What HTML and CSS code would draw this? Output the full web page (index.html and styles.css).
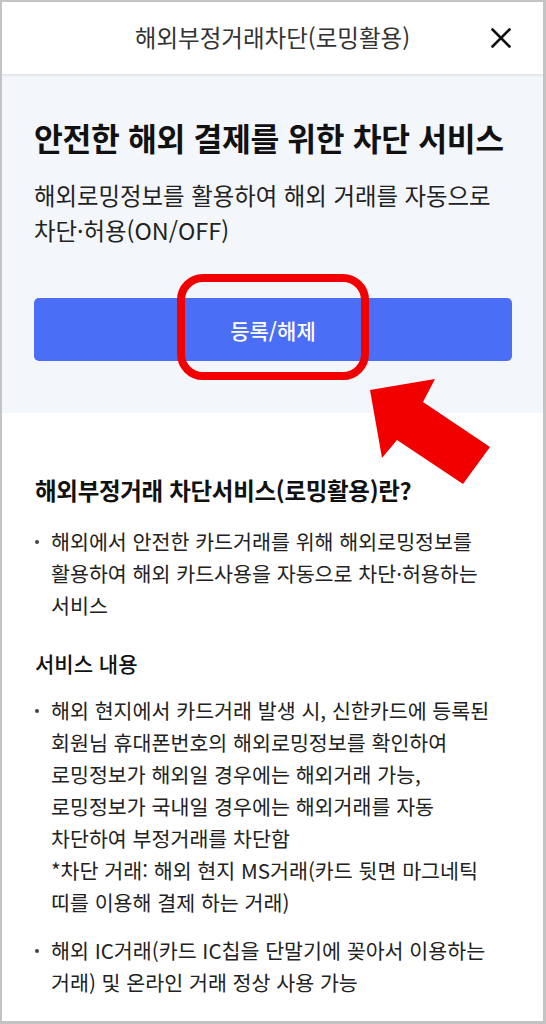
FILE: index.html
```html
<!DOCTYPE html>
<html lang="ko">
<head>
<meta charset="utf-8">
<link rel="stylesheet" href="styles.css">
</head>
<body>
<div class="frame">
  <header class="topbar">
    <h1 class="topbar-title">해외부정거래차단(로밍활용)</h1>
    <button class="close" aria-label="닫기">
      <svg width="22" height="22" viewBox="0 0 22 22"><path d="M2.5 2.5 L19.5 19.5 M19.5 2.5 L2.5 19.5" stroke="#111" stroke-width="2.6" stroke-linecap="round" fill="none"/></svg>
    </button>
  </header>

  <section class="hero">
    <h2 class="hero-title">안전한 해외 결제를 위한 차단 서비스</h2>
    <p class="hero-desc">해외로밍정보를 활용하여 해외 거래를 자동으로<br>차단·허용(ON/OFF)</p>
    <button class="primary">등록/해제</button>
  </section>

  <section class="info">
    <h3 class="info-title">해외부정거래 차단서비스(로밍활용)란?</h3>
    <ul class="bullets">
      <li>해외에서 안전한 카드거래를 위해 해외로밍정보를<br>활용하여 해외 카드사용을 자동으로 차단·허용하는<br>서비스</li>
    </ul>
    <h4 class="sub-title">서비스 내용</h4>
    <ul class="bullets">
      <li>해외 현지에서 카드거래 발생 시, 신한카드에 등록된<br>회원님 휴대폰번호의 해외로밍정보를 확인하여<br>로밍정보가 해외일 경우에는 해외거래 가능,<br>로밍정보가 국내일 경우에는 해외거래를 자동<br>차단하여 부정거래를 차단함<br>*차단 거래: 해외 현지 MS거래(카드 뒷면 마그네틱<br>띠를 이용해 결제 하는 거래)</li>
      <li>해외 IC거래(카드 IC칩을 단말기에 꽂아서 이용하는<br>거래) 및 온라인 거래 정상 사용 가능</li>
    </ul>
  </section>

  <svg class="annot" width="546" height="1024" viewBox="0 0 546 1024">
    <rect x="181" y="278" width="184" height="98" rx="22" ry="22" fill="none" stroke="#f20000" stroke-width="8"/>
    <polygon points="370,390 435,379 423,402 490,447 463,484 397,440 382,458" fill="#f20000"/>
  </svg>
</div>
</body>
</html>
```

FILE: styles.css
```css
* { box-sizing: border-box; }
html, body { margin: 0; padding: 0; }
body {
  font-family: "Noto Sans CJK KR", "Noto Sans", sans-serif;
  color: #1a1a1a;
  background: #fff;
}
.frame {
  position: relative;
  width: 546px;
  height: 1024px;
  border: 2px solid #c3c3c3;
  border-right-width: 3px;
  border-bottom-width: 3px;
  overflow: hidden;
  display: flex;
  flex-direction: column;
}
.topbar {
  height: 72px;
  flex: none;
  display: flex;
  align-items: center;
  justify-content: center;
  position: relative;
  background: #fff;
  box-shadow: 0 1px 3px rgba(0,0,0,0.12);
  z-index: 1;
}
.topbar-title {
  margin: 0 0 2px;
  font-size: 23.5px;
  font-weight: 400;
  color: #333;
}
.close {
  position: absolute;
  right: 31px;
  top: 25px;
  width: 22px;
  height: 22px;
  padding: 0;
  border: 0;
  background: none;
  display: flex;
}
.hero {
  flex: none;
  background: #f3f6fb;
  padding: 46px 31px 52px 32px;
  display: flex;
  flex-direction: column;
}
.hero-title {
  margin: 0;
  font-size: 31.3px;
  line-height: 36px;
  font-weight: 700;
  color: #111;
  letter-spacing: -0.3px;
  white-space: nowrap;
}
.hero-desc {
  margin: 22px 0 0;
  font-size: 23.4px;
  line-height: 35px;
  color: #222;
  font-weight: 400;
  white-space: nowrap;
}
.primary {
  margin-top: 50px;
  height: 63px;
  border: 0;
  border-radius: 5px;
  background: #4a6ef6;
  color: #fff;
  font-family: inherit;
  font-size: 21px;
  font-weight: 500;
}
.info {
  padding: 62px 33px 0 33px;
}
.info-title {
  margin: 0;
  font-size: 23.5px;
  line-height: 30px;
  font-weight: 700;
  color: #111;
  letter-spacing: -0.3px;
}
.sub-title {
  margin: 27px 0 0;
  font-size: 21px;
  line-height: 30px;
  font-weight: 500;
  color: #111;
}
.bullets {
  list-style: none;
  margin: 20px 0 0;
  padding: 0;
}
.sub-title + .bullets { margin-top: 16px; }
.bullets li {
  position: relative;
  padding-left: 16px;
  font-size: 20.6px;
  line-height: 32px;
  color: #222;
  white-space: nowrap;
}
.bullets li + li { margin-top: 16px; }
.bullets li::before {
  content: "";
  position: absolute;
  left: 0;
  top: 15px;
  width: 4px;
  height: 4px;
  border-radius: 50%;
  background: #444;
}
.annot {
  position: absolute;
  left: -2px;
  top: -2px;
  pointer-events: none;
}
```
